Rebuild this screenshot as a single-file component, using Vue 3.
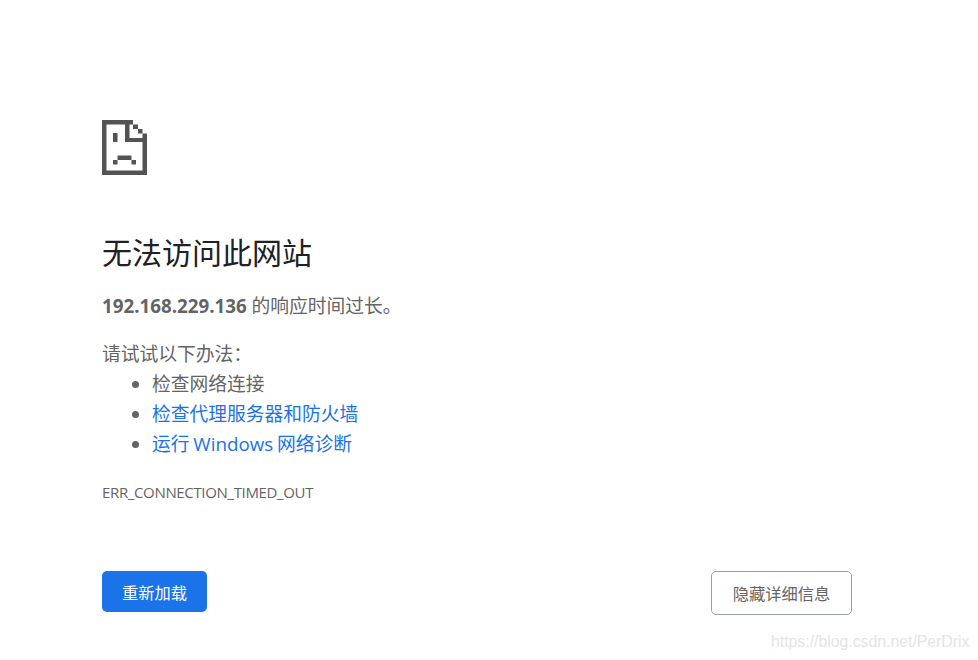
<script setup>
const steps = [
  { text: '检查网络连接', link: false },
  { text: '检查代理服务器和防火墙', link: true },
  { text: '运行 Windows 网络诊断', link: true },
]
</script>

<template>
  <main class="page">
    <svg class="icon" width="45" height="55" viewBox="0 0 45 55" aria-hidden="true">
      <path fill="#535353" fill-rule="evenodd" d="M0 0H31V4.5H27.5V18H45V55H0ZM4.5 4.5V50.5H40.5V22H23V4.5Z" />
      <path fill="#535353" d="M31 4.5H36V9H31ZM36 9H40.5V13.5H36ZM40.5 13.5H45V18H40.5ZM11 13H15.5V22H11ZM15.5 35.5H29.5V40H15.5ZM11 40H15.5V44.5H11ZM29.5 40H34V44.5H29.5Z" />
    </svg>
    <h1 class="title">无法访问此网站</h1>
    <p class="summary"><strong>192.168.229.136</strong> 的响应时间过长。</p>
    <div class="suggest">
      <p class="lead">请试试以下办法：</p>
      <ul class="list">
        <li v-for="s in steps" :key="s.text" :class="{ link: s.link }">
          <span>{{ s.text }}</span>
        </li>
      </ul>
    </div>
    <div class="code">ERR_CONNECTION_TIMED_OUT</div>
    <div class="actions">
      <button class="btn primary">重新加载</button>
      <button class="btn secondary">隐藏详细信息</button>
    </div>
    <div class="mark">https://blog.csdn.net/PerDrix</div>
  </main>
</template>

<style scoped>
.page {
  box-sizing: border-box;
  position: relative;
  width: 978px;
  height: 660px;
  padding: 120px 126px 0 102px;
  background: #fff;
  overflow: hidden;
  color: #646464;
  font-family: "Open Sans", "Noto Sans CJK SC", sans-serif;
}
.icon {
  display: block;
}
.title {
  margin: 55px 0 0;
  font-size: 30px;
  line-height: 46px;
  font-weight: 400;
  color: #202124;
}
.summary {
  margin: 14px 0 0;
  font-size: 18.75px;
  line-height: 31px;
}
.summary strong {
  font-weight: 700;
}
.suggest {
  margin-top: 18px;
  font-size: 18.75px;
}
.lead {
  margin: 0;
  line-height: 30px;
}
.list {
  margin: 0;
  padding: 0 0 0 50px;
}
.list li {
  line-height: 30px;
}
.link span {
  color: #1a73e8;
  word-spacing: -1px;
}
.code {
  margin-top: 23px;
  font-size: 15px;
  line-height: 20px;
  letter-spacing: -0.35px;
}
.actions {
  margin-top: 69px;
  display: flex;
  justify-content: space-between;
  align-items: flex-start;
}
.btn {
  box-sizing: border-box;
  font-family: inherit;
  font-size: 16.25px;
  border-radius: 5px;
  padding: 0;
}
.primary {
  width: 105px;
  height: 41px;
  border: none;
  background: #1a73e8;
  color: #fff;
}
.secondary {
  width: 141px;
  height: 44px;
  border: 1px solid #9aa0a6;
  background: #fff;
  color: #646464;
}
.mark {
  position: absolute;
  left: 771px;
  top: 632px;
  font-family: "Liberation Sans", sans-serif;
  font-size: 15.8px;
  line-height: 20px;
  color: #e4e4e4;
  white-space: nowrap;
}
</style>
